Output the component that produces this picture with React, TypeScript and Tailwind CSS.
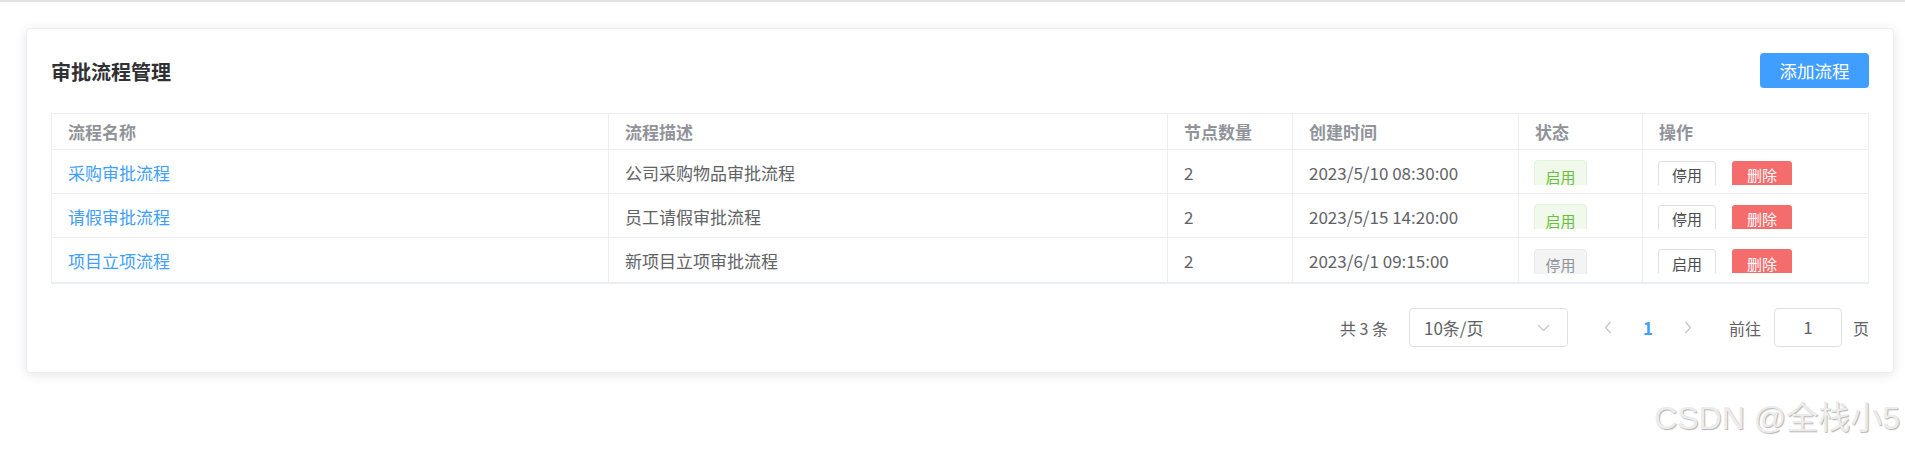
import React from "react";

const rows = [
  { name: "采购审批流程", desc: "公司采购物品审批流程", nodes: 2, time: "2023/5/10 08:30:00", enabled: true },
  { name: "请假审批流程", desc: "员工请假审批流程", nodes: 2, time: "2023/5/15 14:20:00", enabled: true },
  { name: "项目立项流程", desc: "新项目立项审批流程", nodes: 2, time: "2023/6/1 09:15:00", enabled: false },
];

const cols = "grid grid-cols-[557px_559px_125px_226px_124px_225px]";

function Chevron({ dir }: { dir: "left" | "right" | "down" }) {
  if (dir === "down") {
    return (
      <svg width="13" height="8" viewBox="0 0 13 8" fill="none">
        <polyline points="1,1 6.5,6.5 12,1" stroke="#c0c4cc" strokeWidth="1.2" />
      </svg>
    );
  }
  return (
    <svg width="8" height="13" viewBox="0 0 8 13" fill="none">
      {dir === "left" ? (
        <polyline points="6.5,1 1.5,6.5 6.5,12" stroke="#c0c4cc" strokeWidth="1.2" />
      ) : (
        <polyline points="1.5,1 6.5,6.5 1.5,12" stroke="#c0c4cc" strokeWidth="1.2" />
      )}
    </svg>
  );
}

export default function App() {
  const headers = ["流程名称", "流程描述", "节点数量", "创建时间", "状态", "操作"];
  return (
    <div className="relative w-[1905px] h-[451px] bg-white overflow-hidden font-['Noto_Sans_CJK_SC','Noto_Sans',sans-serif]">
      <div className="h-[2px] bg-[#e2e2e2]" />
      <div className="ml-[26px] mt-[26px] w-[1868px] rounded-[4px] border border-[#ebeef5] bg-white shadow-[0_2px_12px_0_rgba(0,0,0,0.1)] px-[24px] pt-[24px] pb-[25px]">
        <div className="flex items-center justify-between h-[35px]">
          <div className="text-[20px] font-bold text-[#303133] leading-none pt-[3px]">审批流程管理</div>
          <button className="h-[35px] w-[109px] rounded-[4px] bg-[#409eff] text-white text-[17.5px] leading-none flex items-center justify-center">
            添加流程
          </button>
        </div>

        <div className="mt-[25px] w-[1818px] border border-[#ebeef5] border-b-2">
          <div className={cols}>
            {headers.map((h, i) => (
              <div
                key={h}
                className={`h-[36px] flex items-center pl-[16px] border-b border-[#ebeef5] text-[17px] font-bold text-[#909399] ${i < 5 ? "border-r" : ""}`}
              >
                {h}
              </div>
            ))}
          </div>
          {rows.map((r, ri) => (
            <div key={r.name} className={cols}>
              <div className={`h-[44px] flex items-center pl-[16px] pt-[2px] border-r border-[#ebeef5] text-[17px] text-[#409eff] ${ri < 2 ? "border-b" : ""}`}>
                {r.name}
              </div>
              <div className={`h-[44px] flex items-center pl-[16px] pt-[2px] border-r border-[#ebeef5] text-[17px] text-[#606266] ${ri < 2 ? "border-b" : ""}`}>
                {r.desc}
              </div>
              <div className={`h-[44px] flex items-center pl-[16px] pt-[2px] border-r border-[#ebeef5] text-[17px] text-[#606266] ${ri < 2 ? "border-b" : ""}`}>
                {r.nodes}
              </div>
              <div className={`h-[44px] flex items-center pl-[16px] pt-[2px] border-r border-[#ebeef5] text-[17px] text-[#606266] ${ri < 2 ? "border-b" : ""}`}>
                {r.time}
              </div>
              <div className={`h-[44px] flex items-center pl-[15px] pt-[2px] border-r border-[#ebeef5] ${ri < 2 ? "border-b" : ""}`}>
                <div className="h-[25px] overflow-hidden">
                  {r.enabled ? (
                    <div className="h-[32px] w-[53px] rounded-[4px] border border-[#e1f3d8] bg-[#f0f9eb] text-[#67c23a] text-[15px] leading-none flex items-center justify-center">
                      启用
                    </div>
                  ) : (
                    <div className="h-[32px] w-[53px] rounded-[4px] border border-[#e9e9eb] bg-[#f4f4f5] text-[#909399] text-[15px] leading-none flex items-center justify-center">
                      停用
                    </div>
                  )}
                </div>
              </div>
              <div className={`h-[44px] flex items-center pl-[15px] pt-[2px] gap-[16px] border-[#ebeef5] ${ri < 2 ? "border-b" : ""}`}>
                <div className="h-[24px] overflow-hidden">
                  <button className="h-[28px] w-[58px] rounded-[3px] border border-[#dcdfe6] bg-white text-[#4a4c50] text-[15px] leading-none flex items-center justify-center">
                    {r.enabled ? "停用" : "启用"}
                  </button>
                </div>
                <div className="h-[24px] overflow-hidden">
                  <button className="h-[28px] w-[60px] rounded-[3px] bg-[#f56c6c] text-white text-[15px] leading-none flex items-center justify-center">
                    删除
                  </button>
                </div>
              </div>
            </div>
          ))}
        </div>

        <div className="mt-[24px] flex items-center justify-end h-[39px] text-[#606266]">
          <span className="text-[16px] leading-none">共 3 条</span>
          <div className="ml-[21px] h-[39px] w-[159px] rounded-[4px] border border-[#dcdfe6] flex items-center justify-between pl-[14px] pr-[17px]">
            <span className="text-[17px] leading-none">10条/页</span>
            <Chevron dir="down" />
          </div>
          <div className="ml-[20px] flex items-center">
            <div className="w-[40px] h-[39px] flex items-center justify-center">
              <Chevron dir="left" />
            </div>
            <div className="w-[40px] h-[39px] flex items-center justify-center text-[17px] font-bold text-[#409eff]">1</div>
            <div className="w-[40px] h-[39px] flex items-center justify-center">
              <Chevron dir="right" />
            </div>
          </div>
          <span className="ml-[21px] text-[16px] leading-none">前往</span>
          <div className="ml-[13px] h-[39px] w-[68px] rounded-[4px] border border-[#dcdfe6] flex items-center justify-center text-[17px] text-[#606266] pb-[1px]">
            1
          </div>
          <span className="ml-[11px] text-[16px] leading-none">页</span>
        </div>
      </div>

      <div className="absolute right-[5px] top-[402px] text-[32px] leading-none text-[#ececec] font-['Liberation_Sans','Noto_Sans_CJK_SC',sans-serif] [text-shadow:1px_1px_1px_rgba(0,0,0,0.3)]">
        CSDN @全栈小5
      </div>
    </div>
  );
}
